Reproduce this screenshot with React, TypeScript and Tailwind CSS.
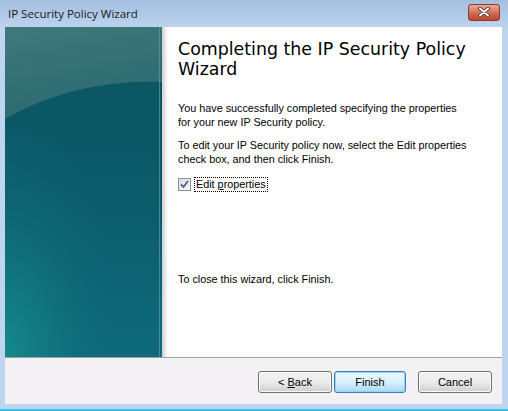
import React from "react";

function SidePicture() {
    return (
        <svg width="157" height="330" viewBox="0 0 157 330" className="block">
            <defs>
                <linearGradient id="base" x1="0" y1="0" x2="0" y2="1">
                    <stop offset="0" stopColor="#0a5462" />
                    <stop offset="0.45" stopColor="#0b5a69" />
                    <stop offset="1" stopColor="#0e6a7c" />
                </linearGradient>
                <radialGradient id="glow" cx="0" cy="1" r="0.75">
                    <stop offset="0" stopColor="#16908e" stopOpacity="0.85" />
                    <stop offset="0.6" stopColor="#127a7e" stopOpacity="0.3" />
                    <stop offset="1" stopColor="#0e6b7d" stopOpacity="0" />
                </radialGradient>
                <linearGradient id="cap" x1="0" y1="0" x2="0.3" y2="1">
                    <stop offset="0" stopColor="#3f797b" />
                    <stop offset="1" stopColor="#2b6a70" />
                </linearGradient>
            </defs>
            <rect width="157" height="330" fill="url(#base)" />
            <rect width="157" height="330" fill="url(#glow)" />
            <path d="M0 0 H157 V55 Q70 52 0 92 Z" fill="url(#cap)" />
            <rect x="154" y="0" width="1" height="330" fill="#5f9aa0" opacity="0.7" />
        </svg>
    );
}

function WinButton({ children, primary }: { children: React.ReactNode; primary?: boolean }) {
    return (
        <button
            className={
                primary
                    ? "w-[72px] h-[22px] rounded-[3px] border border-[#3c7fb1] bg-gradient-to-b from-[#eaf6fd] via-[#d9f0fc] to-[#a7d9f5] text-[11px] text-black shadow-[inset_0_0_0_1px_#9ad1f2]"
                    : "w-[74px] h-[22px] rounded-[3px] border border-[#707070] bg-gradient-to-b from-[#f2f2f2] via-[#ebebeb] to-[#cfcfcf] text-[11px] text-black shadow-[inset_0_0_0_1px_#fbfbfb]"
            }
        >
            {children}
        </button>
    );
}

export default function App() {
    return (
        <div
            className="w-[508px] h-[411px] bg-[#bfd5ef] flex flex-col overflow-hidden"
            style={{ fontFamily: '"Liberation Sans", Arial, sans-serif' }}
        >
            <div className="h-[27px] flex items-center justify-between pl-[8px] pr-[8px] bg-gradient-to-b from-[#a3bedf] to-[#bcd3ee]">
                <span className="text-[11.5px] text-[#1a1a1a]" style={{ fontFamily: '"Open Sans", sans-serif' }}>
                    IP Security Policy Wizard
                </span>
                <div className="w-[32px] h-[17px] mb-[3px] rounded-[3px] border border-[#8a3a2e] bg-gradient-to-b from-[#e9a898] via-[#d5705a] to-[#c0412a] flex items-center justify-center">
                    <svg width="12" height="10" viewBox="0 0 12 10">
                        <path d="M2 1.5 L10 8.5 M10 1.5 L2 8.5" stroke="#3b2a28" strokeWidth="3.6" strokeLinecap="round" />
                        <path d="M2 1.5 L10 8.5 M10 1.5 L2 8.5" stroke="#ffffff" strokeWidth="2" strokeLinecap="round" />
                    </svg>
                </div>
            </div>

            <div className="ml-[5px] mr-[6px] h-[377px] flex flex-col bg-white">
                <div className="h-[330px] flex">
                    <SidePicture />
                    <div className="w-[6px] bg-gradient-to-r from-[#cfcfcf] to-[#ffffff]" />
                    <div className="flex-1 pl-[10px] pr-[10px] pt-[12px] text-black">
                        <h1
                            className="text-[17.4px] leading-[20px] text-black"
                            style={{ fontFamily: '"DejaVu Sans", Verdana, sans-serif' }}
                        >
                            Completing the IP Security Policy Wizard
                        </h1>
                        <p className="mt-[22px] text-[10.8px] leading-[14px]">
                            You have successfully completed specifying the properties
                            <br />
                            for your new IP Security policy.
                        </p>
                        <p className="mt-[9px] text-[10.8px] leading-[14px]">
                            To edit your IP Security policy now, select the Edit properties
                            <br />
                            check box, and then click Finish.
                        </p>
                        <div className="mt-[11px] flex items-center gap-[3px] text-[10.8px]">
                            <div className="w-[13px] h-[13px] border border-[#8e8f8f] bg-gradient-to-br from-[#dcdcdc] to-[#f8f8f8] flex items-center justify-center">
                                <svg width="9" height="9" viewBox="0 0 9 9">
                                    <path d="M1 4.5 L3.5 7 L8 1" fill="none" stroke="#4a5f97" strokeWidth="1.8" />
                                </svg>
                            </div>
                            <span className="border border-dotted border-black px-[1px] leading-[13px]">
                                Edit <span className="underline">p</span>roperties
                            </span>
                        </div>
                        <p className="mt-[80px] text-[10.8px] leading-[14px]">To close this wizard, click Finish.</p>
                    </div>
                </div>
                <div className="h-px bg-[#a0a0a0]" />
                <div className="flex-1 bg-[#f4f1f4] flex items-start justify-end pt-[13px] pr-[10px]">
                    <div className="flex">
                        <WinButton>
                            &lt; <span className="underline">B</span>ack
                        </WinButton>
                        <div className="w-[2px]" />
                        <WinButton primary>Finish</WinButton>
                        <div className="w-[12px]" />
                        <WinButton>Cancel</WinButton>
                    </div>
                </div>
            </div>
            <div className="flex-1" />
            <div className="h-[2px] bg-[#2fc4e6]" />
        </div>
    );
}
